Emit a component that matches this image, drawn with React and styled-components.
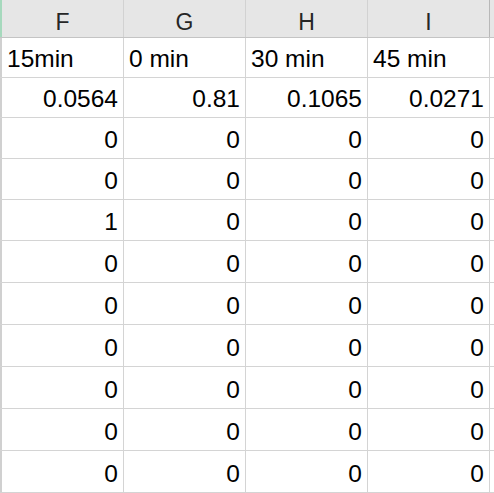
import styled, { createGlobalStyle } from "styled-components";

const columns = ["F", "G", "H", "I"];

const rows = [
  { h: 40, cells: ["15min", "0 min", "30 min", "45 min"], text: true },
  { h: 40, cells: ["0.0564", "0.81", "0.1065", "0.0271"] },
  { h: 41, cells: ["0", "0", "0", "0"] },
  { h: 41, cells: ["0", "0", "0", "0"] },
  { h: 41, cells: ["1", "0", "0", "0"] },
  { h: 42, cells: ["0", "0", "0", "0"] },
  { h: 42, cells: ["0", "0", "0", "0"] },
  { h: 42, cells: ["0", "0", "0", "0"] },
  { h: 42, cells: ["0", "0", "0", "0"] },
  { h: 42, cells: ["0", "0", "0", "0"] },
  { h: 42, cells: ["0", "0", "0", "0"] },
];

const GlobalStyle = createGlobalStyle`
  html, body {
    margin: 0;
    padding: 0;
    background: #ffffff;
    overflow: hidden;
  }
`;

const Sheet = styled.div`
  width: 494px;
  height: 493px;
  overflow: hidden;
  font-family: "Liberation Sans", Arial, sans-serif;
  background: #ffffff;
`;

const GridRow = styled.div`
  display: grid;
  grid-template-columns: 2px repeat(4, 122px) 1fr;
  height: ${(p) => p.h}px;
  box-sizing: border-box;
  border-bottom: 1px solid ${(p) => (p.header ? "#c4c4c4" : "#d4d4d4")};
`;

const Edge = styled.div`
  background: ${(p) => (p.header ? "#a6d9bd" : "#d0d0d0")};
`;

const HeaderCell = styled.div`
  display: flex;
  align-items: flex-end;
  justify-content: center;
  box-sizing: border-box;
  padding-bottom: 3px;
  background: #e6e6e6;
  border-right: 1px solid ${(p) => (p.last ? "#b8b8b8" : "#d2d2d2")};
  color: #262626;
  font-size: 23px;
  line-height: 1;
`;

const Cell = styled.div`
  display: flex;
  align-items: flex-end;
  justify-content: ${(p) => (p.text ? "flex-start" : "flex-end")};
  box-sizing: border-box;
  padding: 0 5px 6px 5px;
  border-right: 1px solid #d4d4d4;
  color: #000000;
  font-size: 24.5px;
  line-height: 1;
  white-space: nowrap;
  overflow: hidden;
`;

const Filler = styled.div`
  background: ${(p) => (p.header ? "#e6e6e6" : "#ffffff")};
`;

export default function App() {
  return (
    <>
      <GlobalStyle />
      <Sheet>
        <GridRow h={38} header>
          <Edge header />
          {columns.map((c, i) => (
            <HeaderCell key={c} last={i === columns.length - 1}>
              {c}
            </HeaderCell>
          ))}
          <Filler header />
        </GridRow>
        {rows.map((r, ri) => (
          <GridRow key={ri} h={r.h}>
            <Edge />
            {r.cells.map((v, ci) => (
              <Cell key={ci} text={r.text}>
                {v}
              </Cell>
            ))}
            <Filler />
          </GridRow>
        ))}
      </Sheet>
    </>
  );
}
